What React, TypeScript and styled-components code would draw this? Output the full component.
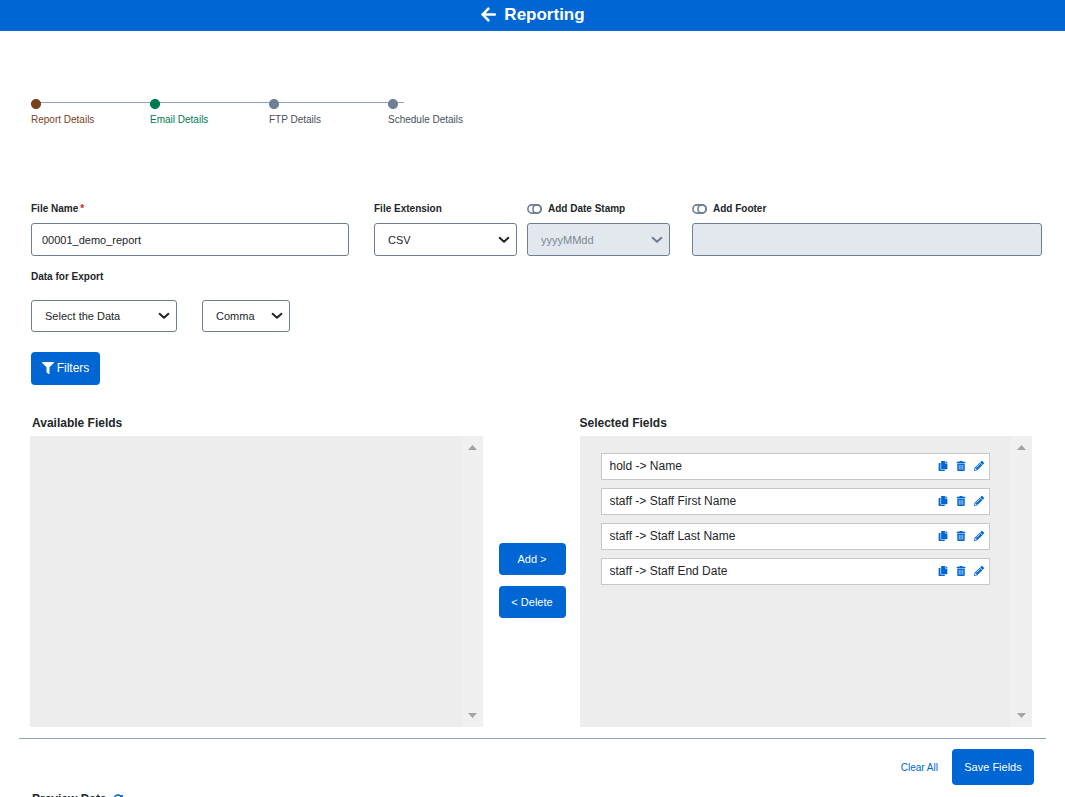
import React from "react";
import styled, { createGlobalStyle } from "styled-components";
import { FaArrowLeft, FaCopy, FaFilter, FaPencilAlt, FaSyncAlt, FaTrashAlt } from "react-icons/fa";

const BLUE = "#0066d3";
const SLATE = "#6c7f94";
const INK = "#222629";

const GlobalStyle = createGlobalStyle`
  *, *::before, *::after { box-sizing: border-box; }
  body {
    margin: 0;
    background: #fff;
    color: ${INK};
    font-family: "Liberation Sans", Arial, sans-serif;
    font-size: 12px;
    line-height: 16px;
  }
  button, input, select { font-family: inherit; color: inherit; }
`;

const Header = styled.header`
  display: flex;
  align-items: center;
  justify-content: center;
  gap: 7px;
  height: 31px;
  padding-bottom: 2px;
  background: ${BLUE};
  color: #fff;
`;

const BackLink = styled.a`
  display: flex;
  color: inherit;
`;

const Title = styled.h1`
  margin: 0;
  font-size: 17px;
  line-height: 20px;
`;

const Main = styled.main`
  padding: 68px 19px 0;
`;

const Steps = styled.ol`
  display: flex;
  margin: 0 0 77px;
  padding: 0 12px;
  list-style: none;
`;

const Step = styled.li<{ $color: string; $text: string; $last?: boolean }>`
  width: 119px;
  color: ${(p) => p.$text};
  font-size: 10px;
  line-height: 12px;
  white-space: nowrap;

  &::before {
    content: "";
    display: block;
    width: ${(p) => (p.$last ? "16px" : "auto")};
    height: 10px;
    margin-bottom: 5px;
    background:
      radial-gradient(circle at 5px 5px, ${(p) => p.$color} 4.6px, transparent 5.4px),
      linear-gradient(#8ba5c1, #8ba5c1) 0 3px / 100% 1px no-repeat;
  }
`;

const FormArea = styled.form`
  padding: 0 4px 0 12px;
`;

const FieldRow = styled.div`
  display: flex;
`;

const Field = styled.div<{ $grow?: number; $before?: number }>`
  flex: ${(p) => (p.$grow ? `${p.$grow} 1 0` : "0 0 143px")};
  min-width: 0;
  margin-left: ${(p) => p.$before ?? 0}px;
`;

const Label = styled.label`
  display: flex;
  align-items: center;
  height: 12px;
  margin-bottom: 8px;
  font-size: 10px;
  font-weight: bold;
  line-height: 12px;
  white-space: nowrap;
`;

const Required = styled.span`
  margin-left: 2px;
  color: #d6201f;
`;

const HiddenCheck = styled.input`
  appearance: none;
  width: 0;
  height: 0;
  margin: 0;
`;

const ToggleIcon = styled.svg`
  margin-right: 6px;
`;

const TextInput = styled.input`
  display: block;
  width: 100%;
  height: 33px;
  padding: 0 10px;
  border: 1px solid ${SLATE};
  border-radius: 3px;
  background: #fff;
  font-size: 11px;

  &:disabled { background: #e3e8ef; }
`;

const SelectBox = styled.div<{ $width?: number; $disabled?: boolean }>`
  display: grid;
  align-items: center;
  width: ${(p) => (p.$width ? `${p.$width}px` : "100%")};
  color: ${(p) => (p.$disabled ? SLATE : INK)};

  > * { grid-area: 1 / 1; }
  > svg { justify-self: end; margin-right: 7px; pointer-events: none; }
`;

const SelectInput = styled.select<{ $height: number }>`
  appearance: none;
  width: 100%;
  height: ${(p) => p.$height}px;
  padding: 0 13px;
  border: 1px solid ${SLATE};
  border-radius: 3px;
  background: #fff;
  font-size: 11px;

  &:disabled { background: #e3e8ef; color: #7b8793; opacity: 1; }
`;

const ExportLegend = styled.h2`
  margin: 15px 0 17px;
  font-size: 10px;
  line-height: 12px;
`;

const ExportRow = styled.div`
  display: flex;
  gap: 25px;
  margin-bottom: 20px;
`;

const PrimaryButton = styled.button<{ $width: number; $height: number; $size?: number }>`
  display: flex;
  align-items: center;
  justify-content: center;
  gap: 3px;
  width: ${(p) => p.$width}px;
  height: ${(p) => p.$height}px;
  padding: 0;
  border: 0;
  border-radius: 4px;
  background: ${BLUE};
  color: #fff;
  font-size: ${(p) => p.$size ?? 11}px;
  white-space: nowrap;
  cursor: pointer;
`;

const FilterButton = styled(PrimaryButton)`
  padding-bottom: 2px;
`;

const Transfer = styled.section`
  display: grid;
  grid-template-columns: minmax(0, 1fr) 97px minmax(0, 1fr);
  margin-top: 30px;
  padding: 0 14px 11px 11px;
  border-bottom: 1px solid #8ba5c1;
`;

const ListColumn = styled.div`
  min-width: 0;
`;

const ListTitle = styled.h2<{ $indent?: boolean }>`
  margin: 0 0 5px;
  padding-left: ${(p) => (p.$indent ? 2 : 0)}px;
  font-size: 12px;
  line-height: 16px;
`;

const Panel = styled.div`
  display: flex;
  height: 291px;
  background: #ededed;
`;

const ItemList = styled.ul`
  display: flex;
  flex: 1;
  flex-direction: column;
  gap: 8px;
  min-width: 0;
  margin: 0;
  padding: 17px 21px;
  list-style: none;
`;

const Item = styled.li`
  display: flex;
  align-items: center;
  gap: 8px;
  height: 27px;
  padding: 0 5px 2px 8px;
  border: 1px solid #c8c8c8;
  background: #fff;
`;

const ItemName = styled.span`
  flex: 1;
  overflow: hidden;
  text-overflow: ellipsis;
  white-space: nowrap;
`;

const IconButton = styled.button`
  display: flex;
  align-items: center;
  justify-content: center;
  width: 10px;
  padding: 0;
  border: 0;
  background: none;
  color: ${BLUE};
  cursor: pointer;
`;

const Track = styled.div`
  display: flex;
  flex-direction: column;
  align-items: center;
  justify-content: space-between;
  width: 21px;
  padding: 9px 0;
  background: #f0f0f0;
`;

const TransferButtons = styled.div`
  display: flex;
  flex-direction: column;
  align-items: center;
  gap: 11px;
  padding-top: 128px;
  padding-left: 2px;
`;

const Actions = styled.div`
  display: flex;
  align-items: center;
  justify-content: flex-end;
  gap: 14px;
  padding: 10px 12px 6px;
`;

const ClearLink = styled.a`
  padding-top: 2px;
  color: ${BLUE};
  font-size: 10px;
  line-height: 12px;
  text-decoration: none;
`;

const Preview = styled.section`
  padding: 0 13px;
`;

const PreviewTitle = styled.h2`
  display: flex;
  align-items: center;
  gap: 6px;
  margin: 0;
  font-size: 12px;
  line-height: 16px;

  svg { color: ${BLUE}; }
`;

const Chevron = () => (
  <svg width="12" height="8" viewBox="0 0 12 8" fill="none" aria-hidden="true">
    <path d="M1.6 1.8 6 5.8l4.4-4" stroke="currentColor" strokeWidth="2" strokeLinecap="round" strokeLinejoin="round" />
  </svg>
);

function Select({ id, label, text, width, height = 33, disabled }: {
  id: string; label?: string; text: string; width?: number; height?: number; disabled?: boolean;
}) {
  return (
    <SelectBox $width={width} $disabled={disabled}>
      <SelectInput id={id} aria-label={label} $height={height} disabled={disabled}>
        <option>{text}</option>
      </SelectInput>
      <Chevron />
    </SelectBox>
  );
}

function ToggleLabel({ children }: { children: string }) {
  return (
    <Label>
      <HiddenCheck type="checkbox" />
      <ToggleIcon width="15" height="10" viewBox="0 0 15 10" fill="none" stroke={SLATE} strokeWidth="1.6" aria-hidden="true">
        <rect x="0.9" y="0.9" width="13.2" height="8.2" rx="4.1" />
        <circle cx="10" cy="5" r="4.1" />
      </ToggleIcon>
      {children}
    </Label>
  );
}

function ScrollTrack() {
  return (
    <Track aria-hidden="true">
      <svg width="9" height="5" viewBox="0 0 9 5"><path d="M0 5 4.5 0 9 5z" fill="#a3a3a3" /></svg>
      <svg width="9" height="5" viewBox="0 0 9 5"><path d="M0 0 4.5 5 9 0z" fill="#a3a3a3" /></svg>
    </Track>
  );
}

const selectedFields = [
  "hold -> Name",
  "staff -> Staff First Name",
  "staff -> Staff Last Name",
  "staff -> Staff End Date",
];

export default function App() {
  return (
    <>
      <GlobalStyle />
      <Header>
        <BackLink href="#back" aria-label="Back"><FaArrowLeft size={17} /></BackLink>
        <Title>Reporting</Title>
      </Header>
      <Main>
        <Steps>
          <Step $color="#7a421c" $text="#7a421c">Report Details</Step>
          <Step $color="#007a53" $text="#007a53">Email Details</Step>
          <Step $color={SLATE} $text="#46505c">FTP Details</Step>
          <Step $color={SLATE} $text="#46505c" $last>Schedule Details</Step>
        </Steps>
        <FormArea>
          <FieldRow>
            <Field $grow={318}>
              <Label htmlFor="file-name">File Name<Required>*</Required></Label>
              <TextInput id="file-name" defaultValue="00001_demo_report" />
            </Field>
            <Field $before={25}>
              <Label htmlFor="extension">File Extension</Label>
              <Select id="extension" text="CSV" />
            </Field>
            <Field $before={10}>
              <ToggleLabel>Add Date Stamp</ToggleLabel>
              <Select id="date-format" label="Date format" text="yyyyMMdd" disabled />
            </Field>
            <Field $grow={350} $before={22}>
              <ToggleLabel>Add Footer</ToggleLabel>
              <TextInput aria-label="Footer" disabled />
            </Field>
          </FieldRow>
          <ExportLegend>Data for Export</ExportLegend>
          <ExportRow>
            <Select id="data" label="Data for Export" text="Select the Data" width={146} height={32} />
            <Select id="delimiter" label="Delimiter" text="Comma" width={88} height={32} />
          </ExportRow>
          <FilterButton type="button" $width={69} $height={33} $size={12}>
            <FaFilter size={12} />
            Filters
          </FilterButton>
        </FormArea>
        <Transfer>
          <ListColumn>
            <ListTitle $indent>Available Fields</ListTitle>
            <Panel>
              <ItemList />
              <ScrollTrack />
            </Panel>
          </ListColumn>
          <TransferButtons>
            <PrimaryButton type="button" $width={67} $height={32}>Add &gt;</PrimaryButton>
            <PrimaryButton type="button" $width={67} $height={32}>&lt; Delete</PrimaryButton>
          </TransferButtons>
          <ListColumn>
            <ListTitle>Selected Fields</ListTitle>
            <Panel>
              <ItemList>
                {selectedFields.map((name) => (
                  <Item key={name}>
                    <ItemName>{name}</ItemName>
                    <IconButton type="button" aria-label={`Copy ${name}`}><FaCopy size={10} /></IconButton>
                    <IconButton type="button" aria-label={`Delete ${name}`}><FaTrashAlt size={10} /></IconButton>
                    <IconButton type="button" aria-label={`Edit ${name}`}><FaPencilAlt size={10} /></IconButton>
                  </Item>
                ))}
              </ItemList>
              <ScrollTrack />
            </Panel>
          </ListColumn>
        </Transfer>
        <Actions>
          <ClearLink href="#clear">Clear All</ClearLink>
          <PrimaryButton type="button" $width={82} $height={36}>Save Fields</PrimaryButton>
        </Actions>
        <Preview>
          <PreviewTitle>Preview Data <FaSyncAlt size={10} /></PreviewTitle>
        </Preview>
      </Main>
    </>
  );
}
